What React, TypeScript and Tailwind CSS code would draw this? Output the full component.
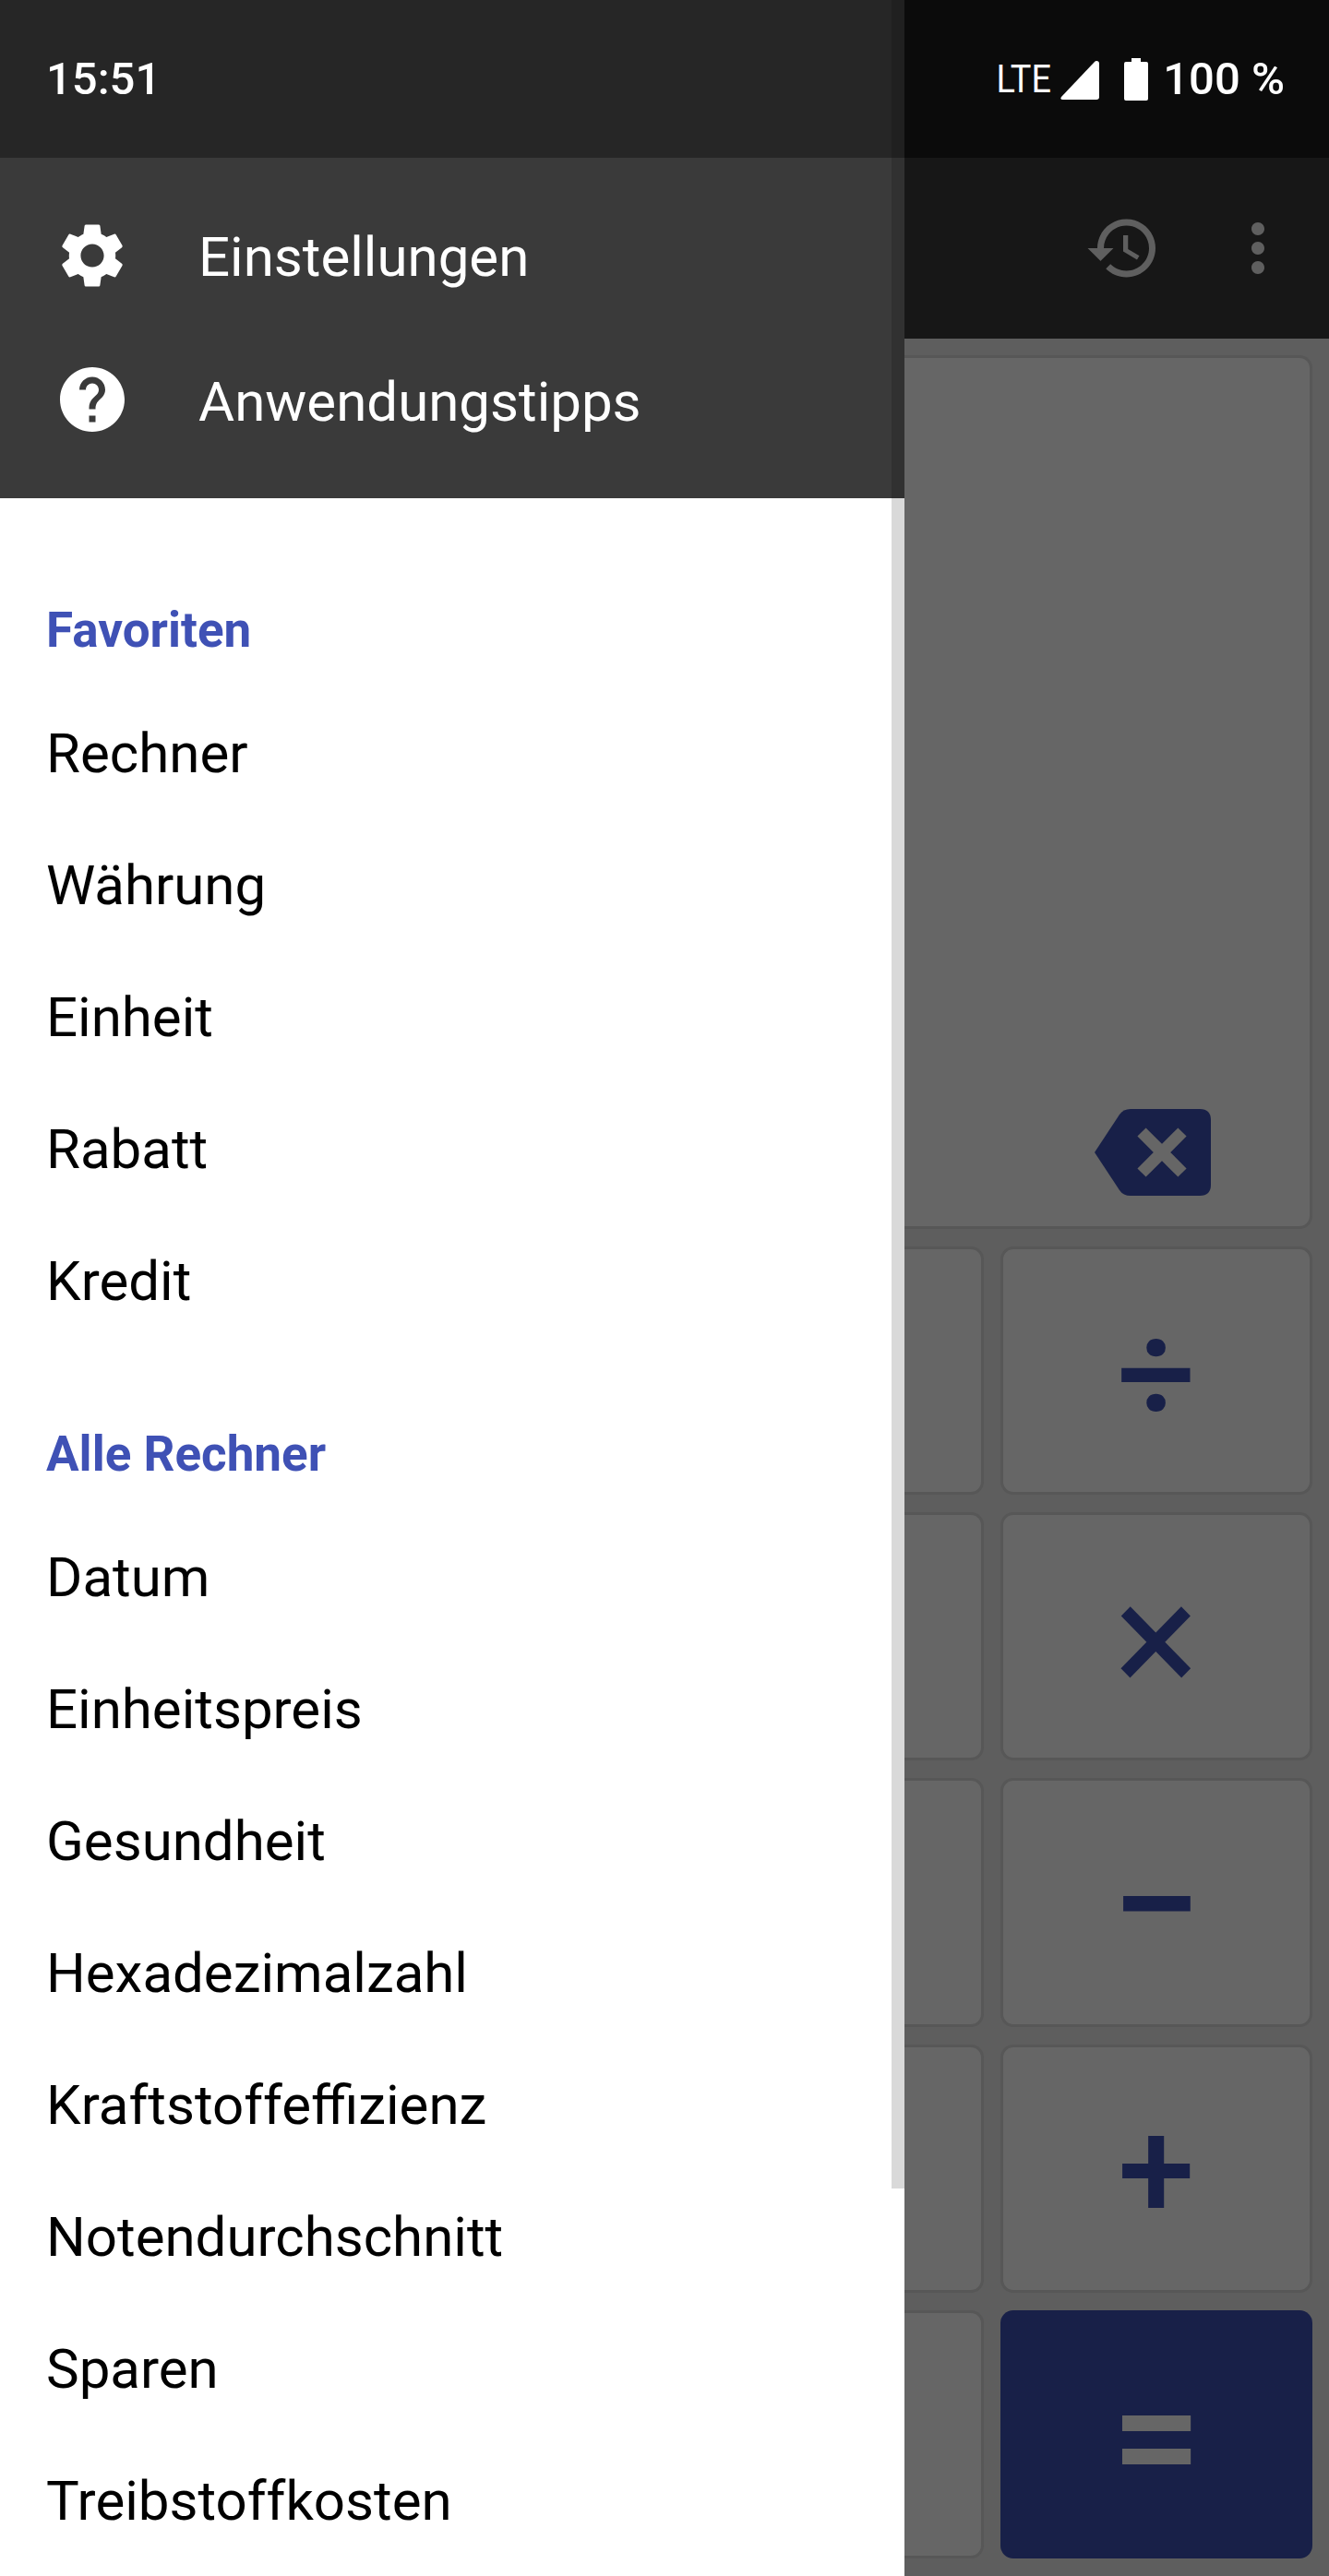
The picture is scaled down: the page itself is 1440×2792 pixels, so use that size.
import React from 'react';

const favorites = ['Rechner', 'Währung', 'Einheit', 'Rabatt', 'Kredit'];
const calculators = [
  'Datum',
  'Einheitspreis',
  'Gesundheit',
  'Hexadezimalzahl',
  'Kraftstoffeffizienz',
  'Notendurchschnitt',
  'Sparen',
  'Treibstoffkosten',
];
const operators = [
  { label: '÷', size: 'text-[150px] font-medium pt-[8px]' },
  { label: '×', size: 'text-[172px] font-normal pt-[6px]' },
  { label: '−', size: 'text-[175px] font-medium pt-[8px]' },
  { label: '+', size: 'text-[150px] font-medium pt-[6px]' },
];

function ListRow({ label }: { label: string }) {
  return <div className="h-[143px] pl-[50px] flex items-center text-[60px] text-black">{label}</div>;
}

function SectionTitle({ label }: { label: string }) {
  return (
    <div className="h-[125px] mt-[53px] pt-[3px] pl-[50px] flex items-center text-[53px] font-bold text-[#3f51b5]">
      {label}
    </div>
  );
}

function Key({ label, size }: { label: string; size: string }) {
  return (
    <>
      <div className="bg-[#666666] border-[3px] border-l-0 border-[#575757] rounded-r-[14px]" />
      <div
        className={`bg-[#666666] border-[3px] border-[#575757] rounded-[14px] flex items-center justify-center text-[#182048] leading-none ${size}`}
      >
        {label}
      </div>
    </>
  );
}

export default function App() {
  return (
    <div className="flex w-[1440px] h-[2792px] overflow-hidden font-['Roboto',sans-serif]">
      <div className="relative w-[980px] shrink-0 flex flex-col bg-white overflow-hidden">
        <div className="h-[171px] shrink-0 bg-[#262626] pl-[50px] flex items-center text-white text-[49px] font-medium">
          15:51
        </div>
        <div className="h-[369px] shrink-0 bg-[#3a3a3a] pt-[28px] text-white text-[60px]">
          <div className="h-[156px] flex items-center">
            <svg viewBox="0 0 24 24" fill="currentColor" className="w-[84px] h-[84px] ml-[58px]">
              <path d="M19.14 12.94c.04-.3.06-.61.06-.94 0-.32-.02-.64-.07-.94l2.03-1.58c.18-.14.23-.41.12-.61l-1.92-3.32c-.12-.22-.37-.29-.59-.22l-2.39.96c-.5-.38-1.03-.7-1.62-.94l-.36-2.54c-.04-.24-.24-.41-.48-.41h-3.84c-.24 0-.43.17-.47.41l-.36 2.54c-.59.24-1.13.57-1.62.94l-2.39-.96c-.22-.08-.47 0-.59.22L2.74 8.87c-.12.21-.08.47.12.61l2.03 1.58c-.05.3-.09.63-.09.94s.02.64.07.94l-2.03 1.58c-.18.14-.23.41-.12.61l1.92 3.32c.12.22.37.29.59.22l2.39-.96c.5.38 1.03.7 1.62.94l.36 2.54c.05.24.24.41.48.41h3.84c.24 0 .44-.17.47-.41l.36-2.54c.59-.24 1.13-.56 1.62-.94l2.39.96c.22.08.47 0 .59-.22l1.92-3.32c.12-.22.07-.47-.12-.61l-2.01-1.58zM12 15.6c-1.98 0-3.6-1.62-3.6-3.6s1.62-3.6 3.6-3.6 3.6 1.62 3.6 3.6-1.62 3.6-3.6 3.6z" />
            </svg>
            <span className="ml-[73px] pt-[4px]">Einstellungen</span>
          </div>
          <div className="h-[156px] flex items-center">
            <svg viewBox="0 0 24 24" fill="currentColor" className="w-[84px] h-[84px] ml-[58px]">
              <path d="M12 2C6.48 2 2 6.48 2 12s4.48 10 10 10 10-4.48 10-10S17.52 2 12 2zm1 17h-2v-2h2v2zm2.07-7.75l-.9.92C13.45 12.9 13 13.5 13 15h-2v-.5c0-1.1.45-2.1 1.17-2.83l1.24-1.26c.37-.36.59-.86.59-1.41 0-1.1-.9-2-2-2s-2 .9-2 2H8c0-2.21 1.79-4 4-4s4 1.79 4 4c0 .88-.36 1.68-.93 2.25z" />
            </svg>
            <span className="ml-[73px] pt-[6px]">Anwendungstipps</span>
          </div>
        </div>

        <div className="pt-[27px]">
          <SectionTitle label="Favoriten" />
          {favorites.map((item) => (
            <ListRow key={item} label={item} />
          ))}
          <SectionTitle label="Alle Rechner" />
          {calculators.map((item) => (
            <ListRow key={item} label={item} />
          ))}
        </div>

        {/* scrollbar thumb sits over everything in the drawer */}
        <div className="absolute top-0 right-0 w-[14px] h-[2372px] bg-black/15" />
      </div>

      <div className="flex-1 flex flex-col bg-[#5e5e5e]">
        <div className="h-[171px] shrink-0 bg-[#0b0b0b] flex items-center justify-end pr-[48px] text-white">
          <span className="text-[42px] leading-none scale-x-[0.9] origin-right mr-[10px]">LTE</span>
          <svg viewBox="0 0 42 42" fill="currentColor" className="w-[42px] h-[42px] mr-[27px] mt-[2px]">
            <path d="M39 0 Q42 0 42 3 V39 Q42 42 39 42 H3 Q-1 42 1 39 L37 1 Q38 0 39 0 Z" />
          </svg>
          <svg viewBox="0 0 26 46" fill="currentColor" className="w-[26px] h-[46px] mr-[16px]">
            <path d="M8 0 H18 V4 H24 Q26 4 26 6 V44 Q26 46 24 46 H2 Q0 46 0 44 V6 Q0 4 2 4 H8 Z" />
          </svg>
          <span className="text-[49px] leading-none font-medium">100 %</span>
        </div>

        <div className="h-[196px] shrink-0 bg-[#171717] flex items-center justify-end pr-[35px] text-[#5f5f5f]">
          <svg viewBox="0 0 24 24" fill="currentColor" className="w-[84px] h-[84px]">
            <path d="M13 3c-4.97 0-9 4.03-9 9H1l3.89 3.89.07.14L9 12H6c0-3.87 3.13-7 7-7s7 3.13 7 7-3.13 7-7 7c-1.93 0-3.68-.79-4.94-2.06l-1.42 1.42C8.27 19.99 10.51 21 13 21c4.97 0 9-4.03 9-9s-4.03-9-9-9zm-1 5v5l4.28 2.54.72-1.21-3.5-2.08V8H12z" />
          </svg>
          <svg viewBox="0 0 24 24" fill="currentColor" className="w-[84px] h-[84px] ml-[62px]">
            <path d="M12 8c1.1 0 2-.9 2-2s-.9-2-2-2-2 .9-2 2 .9 2 2 2zm0 2c-1.1 0-2 .9-2 2s.9 2 2 2 2-.9 2-2-.9-2-2-2zm0 6c-1.1 0-2 .9-2 2s.9 2 2 2 2-.9 2-2-.9-2-2-2z" />
          </svg>
        </div>

        <div className="flex-1 flex flex-col gap-[19px] pt-[18px] pb-[19px] pr-[18px]">
          <div className="h-[947px] shrink-0 bg-[#666666] border-[3px] border-l-0 border-[#575757] rounded-r-[14px] flex items-end justify-end pr-[107px] pb-[33px]">
            <svg viewBox="0 0 126 94" className="w-[126px] h-[94px]">
              <path
                fill="#182048"
                d="M0 47 L27 6 Q31 0 39 0 H114 Q126 0 126 12 V82 Q126 94 114 94 H39 Q31 94 27 88 Z"
              />
              <path d="M51 25 L95 69 M95 25 L51 69" stroke="#666666" strokeWidth="13" fill="none" />
            </svg>
          </div>

          <div className="flex-1 grid grid-cols-[86px_338px] grid-rows-5 gap-x-[18px] gap-y-[19px]">
            {operators.map((op) => (
              <Key key={op.label} label={op.label} size={op.size} />
            ))}
            <div className="bg-[#666666] border-[3px] border-l-0 border-[#575757] rounded-r-[14px]" />
            <div className="bg-[#182048] rounded-[14px] flex items-center justify-center text-[#666666] text-[175px] pt-[6px] font-medium leading-none">
              =
            </div>
          </div>
        </div>
      </div>
    </div>
  );
}
